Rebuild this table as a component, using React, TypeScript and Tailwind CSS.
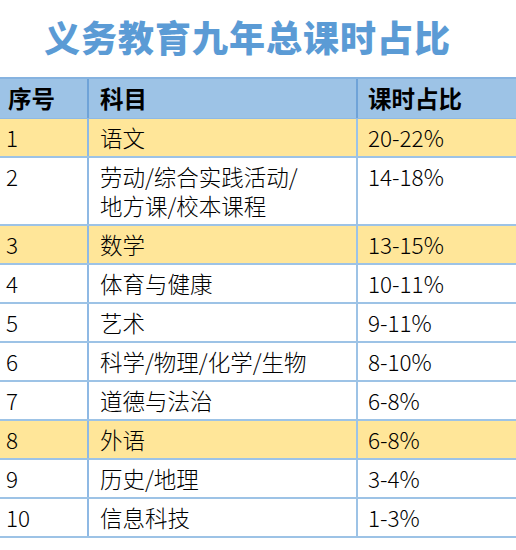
import React from 'react';

const rows = [
    { no: '1', subject: ['语文'], ratio: '20-22%', hl: true },
    { no: '2', subject: ['劳动/综合实践活动/', '地方课/校本课程'], ratio: '14-18%', hl: false },
    { no: '3', subject: ['数学'], ratio: '13-15%', hl: true },
    { no: '4', subject: ['体育与健康'], ratio: '10-11%', hl: false },
    { no: '5', subject: ['艺术'], ratio: '9-11%', hl: false },
    { no: '6', subject: ['科学/物理/化学/生物'], ratio: '8-10%', hl: false },
    { no: '7', subject: ['道德与法治'], ratio: '6-8%', hl: false },
    { no: '8', subject: ['外语'], ratio: '6-8%', hl: true },
    { no: '9', subject: ['历史/地理'], ratio: '3-4%', hl: false },
    { no: '10', subject: ['信息科技'], ratio: '1-3%', hl: false },
];

const font = { fontFamily: '"Noto Sans CJK SC", "Noto Sans", sans-serif' };

const App = () => {
    return (
        <div className="w-[516px] h-[550px] bg-white overflow-hidden" style={font}>
            {/* Title */}
            <div className="h-[77px] flex items-center pl-[44px] pb-[6px]">
                <h1 className="text-[36px] font-black text-[#5b9bd5] tracking-[1px] leading-none">
                    义务教育九年总课时占比
                </h1>
            </div>

            {/* Table */}
            <div className="border-t-2 border-[#86b3e0]">
                <div className="grid grid-cols-[89px_269px_1fr] bg-[#9dc3e6] h-[40px] border-b border-[#8fb9e4] text-[23.5px] font-bold text-black">
                    <div className="pl-[8px] flex items-center border-r-2 border-[#6fa3d8]">序号</div>
                    <div className="pl-[11px] flex items-center border-r-2 border-[#6fa3d8]">科目</div>
                    <div className="pl-[10px] flex items-center">课时占比</div>
                </div>
                {rows.map((r) => (
                    <div
                        key={r.no}
                        className={`grid grid-cols-[89px_269px_1fr] border-b-2 border-[#9dc3e6] text-[22.5px] font-light text-black leading-[29px] ${r.hl ? 'bg-[#ffe699]' : 'bg-white'}`}
                    >
                        <div className="pl-[6px] py-[4px] border-r-2 border-[#8fb9e4]">{r.no}</div>
                        <div className="pl-[11px] py-[4px] border-r-2 border-[#9dc3e6]">
                            {r.subject.map((s) => (
                                <div key={s}>{s}</div>
                            ))}
                        </div>
                        <div className="pl-[10px] py-[4px]">{r.ratio}</div>
                    </div>
                ))}
            </div>
        </div>
    );
};

export default App;
